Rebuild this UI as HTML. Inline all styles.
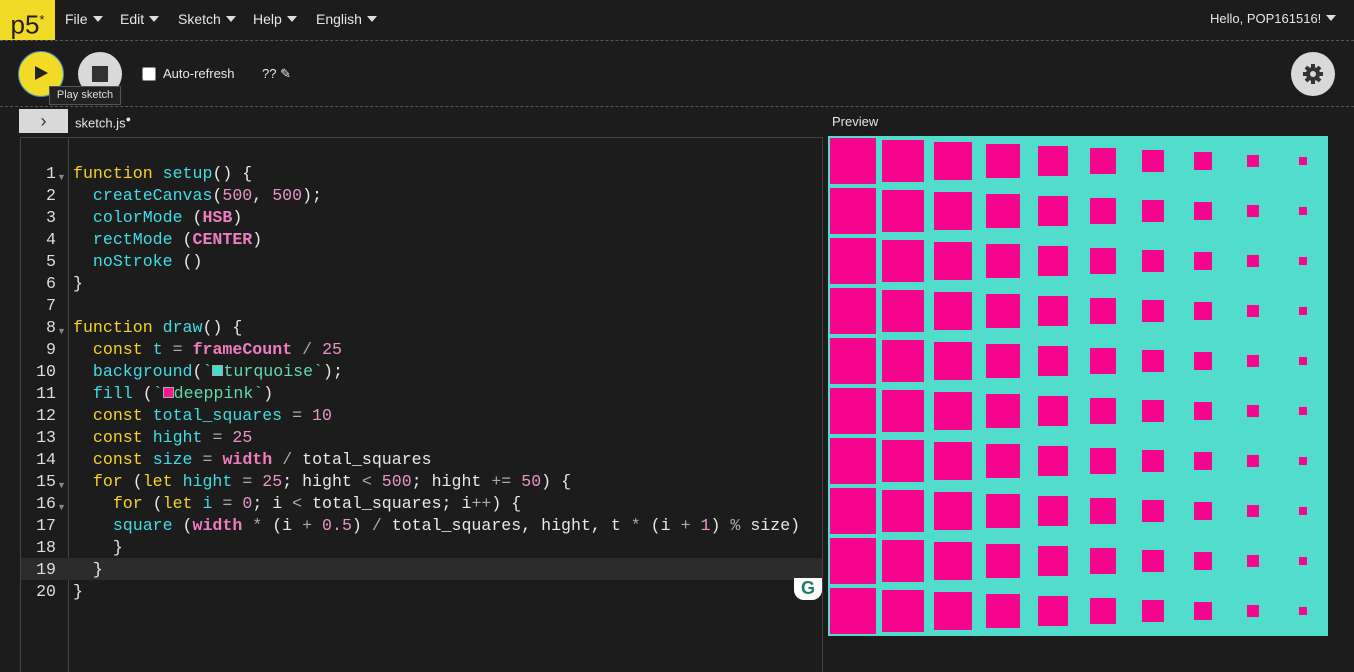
<!DOCTYPE html>
<html><head><meta charset="utf-8"><style>
body{margin:0;width:1354px;height:672px;background:#1c1c1c;overflow:hidden;font-family:"Liberation Sans",sans-serif;color:#e6e6e6;position:relative}
.abs{position:absolute}
.nav{font-size:14px;top:11px}
.tri{display:inline-block;width:0;height:0;border-left:5px solid transparent;border-right:5px solid transparent;border-top:6px solid #ddd;margin-left:5px;vertical-align:2px}
.dash{position:absolute;left:0;width:1354px;border-top:1px dashed #555}
.code{position:absolute;left:20px;top:137px;width:803px;height:535px;border:1px solid #444;border-bottom:none;box-sizing:border-box}
.ln{position:absolute;left:20px;width:36px;text-align:right;font:16.6px "Liberation Mono",monospace;color:#ddd}
.cl{position:absolute;left:73px;font:16.6px "Liberation Mono",monospace;white-space:pre;color:#e8e8e8}
.k{color:#f3d325}.f{color:#3ddde6}.n{color:#e894c8}.b{color:#f07cc0;font-weight:bold}.s{color:#5bdca8}.o{color:#aaa}
</style></head><body>
<div class="abs" style="left:0;top:0;width:55px;height:40px;background:#f1db26;color:#222;font-size:26px;line-height:40px;text-align:center">p5<sup style="font-size:13px">*</sup></div>
<div class="abs nav" style="left:65px">File<span class="tri"></span></div>
<div class="abs nav" style="left:120px">Edit<span class="tri"></span></div>
<div class="abs nav" style="left:178px">Sketch<span class="tri"></span></div>
<div class="abs nav" style="left:253px">Help<span class="tri"></span></div>
<div class="abs nav" style="left:316px">English<span class="tri"></span></div>
<div class="abs nav" style="left:1210px;font-size:13px">Hello, POP161516!<span class="tri"></span></div>
<div class="dash" style="top:40px"></div>
<div class="abs" style="left:18px;top:51px;width:44px;height:44px;border-radius:50%;background:#f1db26;border:1px solid #3a8fc0"></div>
<div class="abs" style="left:35px;top:66px;width:0;height:0;border-top:7.5px solid transparent;border-bottom:7.5px solid transparent;border-left:13px solid #222"></div>
<div class="abs" style="left:78px;top:52px;width:44px;height:44px;border-radius:50%;background:#d9d9d9"></div>
<div class="abs" style="left:92px;top:66px;width:16px;height:16px;background:#333"></div>
<div class="abs" style="left:49px;top:86px;width:70px;height:17px;background:#222;border:1px solid #555;font-size:11px;line-height:17px;text-align:center;color:#ddd">Play sketch</div>
<div class="abs" style="left:142px;top:67px;width:12px;height:12px;background:#fff;border:1px solid #888;border-radius:2px"></div>
<div class="abs" style="left:163px;top:66px;font-size:13px">Auto-refresh</div>
<div class="abs" style="left:262px;top:66px;font-size:13px">?? ✎</div>
<div class="abs" style="left:1291px;top:52px;width:44px;height:44px;border-radius:50%;background:#d9d9d9"></div>
<svg class="abs" style="left:1302px;top:63px" width="22" height="22" viewBox="0 0 22 22"><g fill="#333"><circle cx="11" cy="11" r="7"/><g stroke="#333" stroke-width="4"><line x1="11" y1="1" x2="11" y2="21"/><line x1="1" y1="11" x2="21" y2="11"/><line x1="4" y1="4" x2="18" y2="18"/><line x1="18" y1="4" x2="4" y2="18"/></g></g><circle cx="11" cy="11" r="3" fill="#d9d9d9"/></svg>
<div class="dash" style="top:106px"></div>
<div class="abs" style="left:19px;top:109px;width:49px;height:24px;background:#d9d9d9;color:#333;text-align:center;font-size:18px;line-height:24px">›</div>
<div class="abs" style="left:75px;top:114px;font-size:13px">sketch.js<sup style="font-size:9px">●</sup></div>
<div class="abs" style="left:832px;top:114px;font-size:13px">Preview</div>
<div class="code"></div>
<div class="abs" style="left:68px;top:137px;width:1px;height:535px;background:#444"></div>
<div class="abs" style="left:21px;top:558px;width:801px;height:22px;background:#2c2c2c"></div>
<div class="abs" style="left:794px;top:578px;width:28px;height:22px;background:#fff;border-radius:0 0 10px 10px;color:#1b7a6c;font-weight:bold;text-align:center;font-size:18px;line-height:20px">G</div>
<div class="ln" style="top:163px;line-height:22px">1<br>2<br>3<br>4<br>5<br>6<br>7<br>8<br>9<br>10<br>11<br>12<br>13<br>14<br>15<br>16<br>17<br>18<br>19<br>20</div>
<div class="abs" style="left:57px;top:166px;color:#888;font-size:9px;line-height:22px">▼<br><br><br><br><br><br><br>▼<br><br><br><br><br><br><br>▼<br>▼</div>
<div class="cl" style="top:163px;line-height:22px"><span class="k">function</span> <span class="f">setup</span>() {
  <span class="f">createCanvas</span>(<span class="n">500</span>, <span class="n">500</span>);
  <span class="f">colorMode</span> (<span class="b">HSB</span>)
  <span class="f">rectMode</span> (<span class="b">CENTER</span>)
  <span class="f">noStroke</span> ()
}

<span class="k">function</span> <span class="f">draw</span>() {
  <span class="k">const</span> <span class="f">t</span> <span class="o">=</span> <span class="b">frameCount</span> <span class="o">/</span> <span class="n">25</span>
  <span class="f">background</span>(<span class="s">`<span style="display:inline-block;width:9px;height:9px;background:#40e0d0;border:1px solid #aaa"></span>turquoise`</span>);
  <span class="f">fill</span> (<span class="s">`<span style="display:inline-block;width:9px;height:9px;background:#ff1493;border:1px solid #aaa"></span>deeppink`</span>)
  <span class="k">const</span> <span class="f">total_squares</span> <span class="o">=</span> <span class="n">10</span>
  <span class="k">const</span> <span class="f">hight</span> <span class="o">=</span> <span class="n">25</span>
  <span class="k">const</span> <span class="f">size</span> <span class="o">=</span> <span class="b">width</span> <span class="o">/</span> total_squares
  <span class="k">for</span> (<span class="k">let</span> <span class="f">hight</span> <span class="o">=</span> <span class="n">25</span>; hight <span class="o">&lt;</span> <span class="n">500</span>; hight <span class="o">+=</span> <span class="n">50</span>) {
    <span class="k">for</span> (<span class="k">let</span> <span class="f">i</span> <span class="o">=</span> <span class="n">0</span>; i <span class="o">&lt;</span> total_squares; i<span class="o">++</span>) {
    <span class="f">square</span> (<span class="b">width</span> <span class="o">*</span> (i <span class="o">+</span> <span class="n">0.5</span>) <span class="o">/</span> total_squares, hight, t <span class="o">*</span> (i <span class="o">+</span> <span class="n">1</span>) <span class="o">%</span> size)
    }
  }
}</div>
<svg class="abs" style="left:828px;top:136px" width="500" height="500">
<defs>
<pattern id="p0" width="50" height="50" patternUnits="userSpaceOnUse"><rect x="2" y="2" width="46" height="46" fill="#f7058f"/></pattern>
<pattern id="p1" width="50" height="50" patternUnits="userSpaceOnUse"><rect x="4" y="4" width="42" height="42" fill="#f7058f"/></pattern>
<pattern id="p2" width="50" height="50" patternUnits="userSpaceOnUse"><rect x="6" y="6" width="38" height="38" fill="#f7058f"/></pattern>
<pattern id="p3" width="50" height="50" patternUnits="userSpaceOnUse"><rect x="8" y="8" width="34" height="34" fill="#f7058f"/></pattern>
<pattern id="p4" width="50" height="50" patternUnits="userSpaceOnUse"><rect x="10" y="10" width="30" height="30" fill="#f7058f"/></pattern>
<pattern id="p5" width="50" height="50" patternUnits="userSpaceOnUse"><rect x="12" y="12" width="26" height="26" fill="#f7058f"/></pattern>
<pattern id="p6" width="50" height="50" patternUnits="userSpaceOnUse"><rect x="14" y="14" width="22" height="22" fill="#f7058f"/></pattern>
<pattern id="p7" width="50" height="50" patternUnits="userSpaceOnUse"><rect x="16" y="16" width="18" height="18" fill="#f7058f"/></pattern>
<pattern id="p8" width="50" height="50" patternUnits="userSpaceOnUse"><rect x="19" y="19" width="12" height="12" fill="#f7058f"/></pattern>
<pattern id="p9" width="50" height="50" patternUnits="userSpaceOnUse"><rect x="21" y="21" width="8" height="8" fill="#f7058f"/></pattern>
</defs>
<rect width="500" height="500" fill="#52dccc"/>
<rect x="0" width="50" height="500" fill="url(#p0)"/>
<rect x="50" width="50" height="500" fill="url(#p1)"/>
<rect x="100" width="50" height="500" fill="url(#p2)"/>
<rect x="150" width="50" height="500" fill="url(#p3)"/>
<rect x="200" width="50" height="500" fill="url(#p4)"/>
<rect x="250" width="50" height="500" fill="url(#p5)"/>
<rect x="300" width="50" height="500" fill="url(#p6)"/>
<rect x="350" width="50" height="500" fill="url(#p7)"/>
<rect x="400" width="50" height="500" fill="url(#p8)"/>
<rect x="450" width="50" height="500" fill="url(#p9)"/>
</svg>
</body></html>
